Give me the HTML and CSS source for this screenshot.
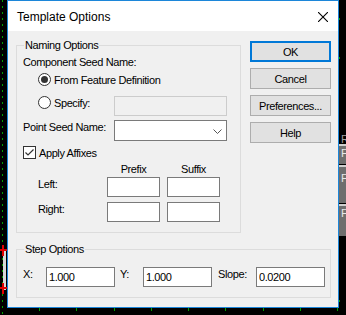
FILE: index.html
```html
<!DOCTYPE html>
<html lang="en">
<head>
    <meta charset="UTF-8">
    <meta name="viewport" content="width=device-width, initial-scale=1.0">
    <title>Template Options</title>
    <link rel="stylesheet" href="styles.css">
</head>
<body>
    <div class="desk">
        <div class="grid-line"></div>
        <div class="ticks"></div>
        <span class="dot dot-a"></span>
        <span class="dot dot-b"></span>
        <span class="dot dot-c"></span>

        <div class="shape-left">
            <span class="cross cross-top"></span>
            <span class="cross cross-bottom"></span>
        </div>

        <div class="shape-right">
            <span class="tag-r">R</span>
            <div class="tag tag-1">F</div>
            <div class="tag tag-2">F</div>
            <div class="tag tag-3">F</div>
        </div>

        <div class="dialog">
            <div class="titlebar">
                <span class="title">Template Options</span>
                <svg class="close" width="10" height="10" viewBox="0 0 10 10">
                    <path d="M0 0 L10 10 M10 0 L0 10" stroke="#000" stroke-width="1.1" fill="none"/>
                </svg>
            </div>

            <div class="client">
                <div class="top-row">
                    <fieldset class="group naming">
                        <legend>Naming Options</legend>
                        <div class="caption">Component Seed Name:</div>
                        <div class="option option-first">
                            <span class="radio checked"></span>
                            <span>From Feature Definition</span>
                        </div>
                        <div class="option option-specify">
                            <span class="radio"></span>
                            <span>Specify:</span>
                            <input class="textbox textbox-disabled" type="text" disabled>
                        </div>
                        <div class="field-row">
                            <span>Point Seed Name:</span>
                            <div class="combobox">
                                <svg width="9" height="5" viewBox="0 0 9 5">
                                    <polyline points="0.5,0.5 4.5,4.5 8.5,0.5" stroke="#555" stroke-width="1" fill="none"/>
                                </svg>
                            </div>
                        </div>
                        <div class="check-row">
                            <span class="checkbox">
                                <svg width="11" height="11" viewBox="0 0 11 11">
                                    <polyline points="1.5,5.5 4,8 9.5,2.5" stroke="#333" stroke-width="1.2" fill="none"/>
                                </svg>
                            </span>
                            <span>Apply Affixes</span>
                        </div>
                        <div class="affix-head">
                            <span></span>
                            <span>Prefix</span>
                            <span>Suffix</span>
                        </div>
                        <div class="affix-grid">
                            <span>Left:</span>
                            <input class="textbox" type="text">
                            <input class="textbox" type="text">
                            <span>Right:</span>
                            <input class="textbox" type="text">
                            <input class="textbox" type="text">
                        </div>
                    </fieldset>

                    <div class="buttons">
                        <button class="btn btn-default">OK</button>
                        <button class="btn">Cancel</button>
                        <button class="btn">Preferences...</button>
                        <button class="btn">Help</button>
                    </div>
                </div>

                <fieldset class="group step">
                    <legend>Step Options</legend>
                    <div class="step-row">
                        <span class="step-label">X:</span>
                        <input class="textbox step-input" type="text" value="1.000">
                        <span class="step-label step-label-y">Y:</span>
                        <input class="textbox step-input" type="text" value="1.000">
                        <span class="step-label step-label-slope">Slope:</span>
                        <input class="textbox step-input" type="text" value="0.0200">
                    </div>
                </fieldset>
            </div>
        </div>
    </div>
</body>
</html>
```

FILE: styles.css
```css
body {
    margin: 0;
    background: #000;
    font-family: 'Liberation Sans', Arial, sans-serif;
    font-size: 11px;
    letter-spacing: -0.4px;
    color: #000;
    overflow: hidden;
}

.desk {
    position: relative;
    width: 346px;
    height: 315px;
    overflow: hidden;
}

/* backdrop drawing behind the dialog */
.grid-line {
    position: absolute;
    left: 2px;
    top: 0;
    width: 1px;
    height: 315px;
    background: repeating-linear-gradient(to bottom, #00a000 0 2px, transparent 2px 6px);
}

.ticks {
    position: absolute;
    left: 3px;
    top: 308px;
    width: 343px;
    height: 3px;
    background: repeating-linear-gradient(to right, transparent 0 36.25px, #00a000 36.25px 37.25px);
}

.dot {
    position: absolute;
    left: 339px;
    width: 1px;
    height: 2px;
    background: #00a000;
}

.dot-a { top: 18px; }
.dot-b { top: 57px; }
.dot-c { top: 300px; }

.shape-left {
    position: absolute;
    left: 0;
    top: 244px;
    width: 7px;
    height: 53px;
}

.shape-left::before {
    content: '';
    position: absolute;
    left: 3px;
    top: 6px;
    width: 3px;
    height: 40px;
    background: #d8d8d8;
}

.cross {
    position: absolute;
    left: 0;
    width: 7px;
    height: 11px;
}

.cross::before {
    content: '';
    position: absolute;
    left: 0;
    top: 4px;
    width: 7px;
    height: 2px;
    background: #e00000;
}

.cross::after {
    content: '';
    position: absolute;
    left: 2px;
    top: 0;
    width: 2px;
    height: 11px;
    background: #e00000;
}

.cross-top { top: 1px; }
.cross-bottom { top: 39px; }

.shape-right {
    position: absolute;
    left: 339px;
    top: 0;
    width: 7px;
    height: 315px;
}

.tag-r {
    position: absolute;
    left: 2px;
    top: 133px;
    color: #a0a0a0;
}

.tag {
    position: absolute;
    left: 0;
    width: 7px;
    padding-left: 2px;
    background: #6e6e6e;
    border-top: 2px solid #cfcfcf;
    color: #e8e8e8;
    line-height: 14px;
}

.tag-1 { top: 144px; height: 18px; }
.tag-2 { top: 165px; height: 36px; line-height: 22px; }
.tag-3 { top: 204px; height: 30px; }

/* dialog window */
.dialog {
    position: absolute;
    left: 7px;
    top: 0;
    width: 332px;
    height: 308px;
    box-sizing: border-box;
    border: 1px solid #1c86d9;
    background: #f0f0f0;
}

.titlebar {
    height: 30px;
    background: #fff;
    display: flex;
    align-items: center;
    justify-content: space-between;
    padding: 0 10px 0 9px;
}

.title {
    font-size: 12px;
    letter-spacing: 0;
    margin-top: 1px;
}

.close {
    display: block;
    margin-top: 1px;
}

.client {
    padding: 7px 0 0 8px;
}

.top-row {
    display: flex;
    align-items: flex-start;
}

.group {
    margin: 0;
    border: 1px solid #dcdcdc;
    box-sizing: border-box;
    min-width: 0;
}

.group legend {
    margin-left: 1px;
    padding: 0 1px;
    line-height: 14px;
}

.naming {
    width: 225px;
    padding: 0 13px 10px 6px;
}

.caption {
    margin-top: 3px;
    line-height: 14px;
}

.option {
    display: flex;
    align-items: flex-start;
    margin-left: 15px;
    line-height: 14px;
}

.option-first { margin-top: 4px; }
.option-specify { margin-top: 9px; }

.radio {
    width: 13px;
    height: 13px;
    box-sizing: border-box;
    border: 1px solid #333;
    border-radius: 50%;
    background: #fff;
    margin-right: 3px;
    display: flex;
    align-items: center;
    justify-content: center;
}

.radio.checked::after {
    content: '';
    width: 7px;
    height: 7px;
    border-radius: 50%;
    background: #333;
}

.textbox {
    margin: 0;
    width: 53px;
    height: 20px;
    box-sizing: border-box;
    border: 1px solid #7a7a7a;
    background: #fff;
    padding: 0 2px;
    font: inherit;
    letter-spacing: inherit;
    color: #000;
    outline: none;
}

.textbox-disabled {
    margin-left: auto;
    width: 113px;
    border-color: #cccccc;
    background: #f0f0f0;
}

.field-row {
    display: flex;
    margin-top: 4px;
    line-height: 14px;
}

.combobox {
    margin-left: auto;
    width: 113px;
    height: 21px;
    box-sizing: border-box;
    border: 1px solid #7a7a7a;
    background: #fff;
    display: flex;
    align-items: center;
    justify-content: flex-end;
    padding: 1px 4px 0 0;
}

.combobox svg {
    display: block;
}

.check-row {
    display: flex;
    margin-top: 5px;
    line-height: 14px;
}

.checkbox {
    width: 13px;
    height: 13px;
    box-sizing: border-box;
    border: 1px solid #333;
    background: #fff;
    margin-right: 3px;
}

.checkbox svg {
    display: block;
}

.affix-head,
.affix-grid {
    display: grid;
    grid-template-columns: 62px 53px 53px;
    column-gap: 7px;
    margin-left: 15px;
}

.affix-head {
    margin-top: 2px;
    line-height: 14px;
    text-align: center;
}

.affix-grid {
    margin-top: 1px;
    grid-auto-rows: 20px;
    row-gap: 5px;
    line-height: 14px;
}

.buttons {
    display: flex;
    flex-direction: column;
    gap: 6px;
    width: 81px;
    margin: 3px 0 0 9px;
}

.btn {
    height: 21px;
    margin: 0;
    padding: 0;
    box-sizing: border-box;
    border: 1px solid #adadad;
    background: #e1e1e1;
    font: inherit;
    letter-spacing: inherit;
    color: #000;
    text-align: center;
}

.btn-default {
    border: 2px solid #0078d7;
}

.step {
    margin-top: 9px;
    width: 315px;
    padding: 0 0 10px 6px;
}

.step-row {
    display: flex;
    align-items: flex-start;
    margin-top: 11px;
    line-height: 14px;
}

.step-label {
    width: 23px;
}

.step-label-y {
    margin-left: 5px;
}

.step-label-slope {
    width: 38px;
    margin-left: 6px;
}

.step-input {
    width: 69px;
}
```
